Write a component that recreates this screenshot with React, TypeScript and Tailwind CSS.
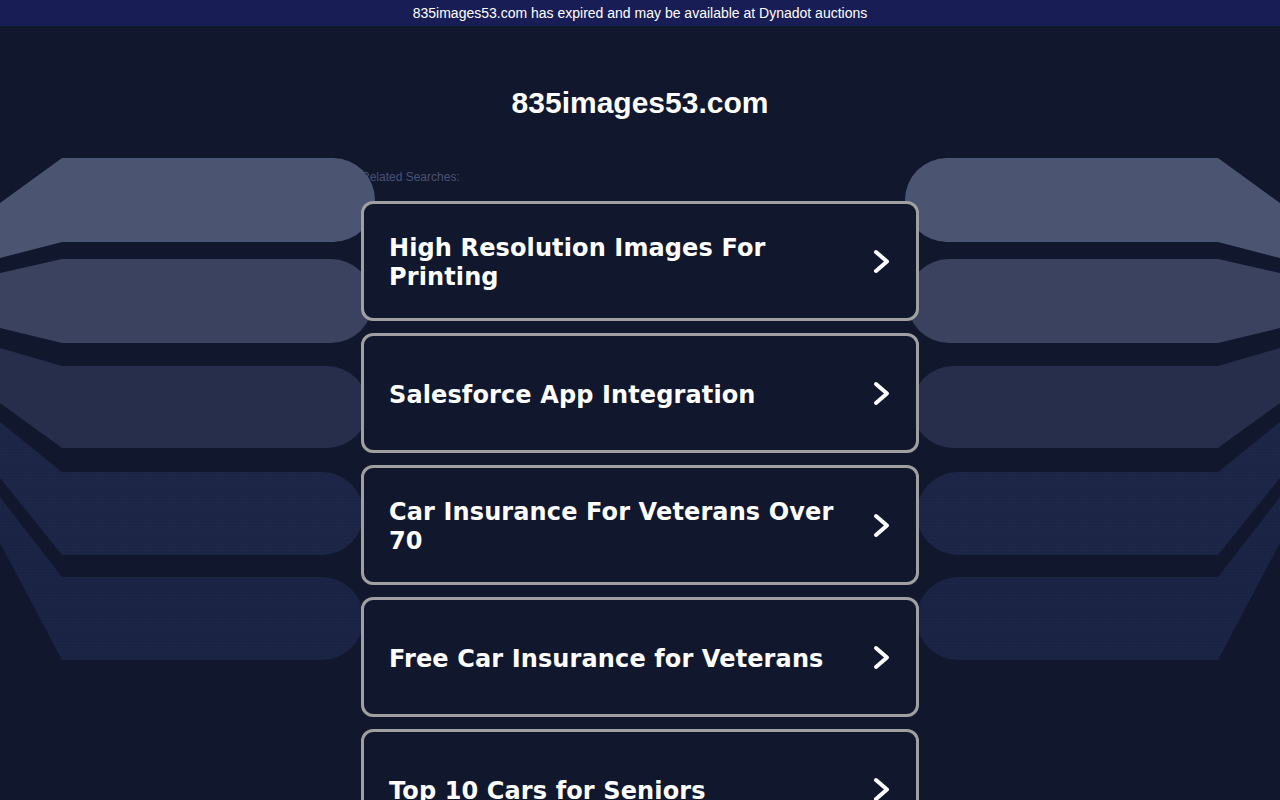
import React from 'react'

const searches = [
  'High Resolution Images For Printing',
  'Salesforce App Integration',
  'Car Insurance For Veterans Over 70',
  'Free Car Insurance for Veterans',
  'Top 10 Cars for Seniors',
]

// left-hand bands, drawn in page coordinates (mirrored for the right side)
const bands = [
  { d: 'M0 203 L62 158 H333 A42 42 0 0 1 333 242 H62 L0 258 Z', fill: '#4b5572' },
  { d: 'M0 273 L62 259 H331 A42 42 0 0 1 331 343 H62 L0 328 Z', fill: '#3a4260' },
  { d: 'M0 348 L62 366 H327 A41 41 0 0 1 327 448 H62 L0 403 Z', fill: '#262e4c' },
  { d: 'M0 422 L62 472 H322 A41.5 41.5 0 0 1 322 555 H62 L0 478 Z', fill: '#1d2547', dots: true },
  { d: 'M0 497 L62 577 H322 A41.5 41.5 0 0 1 322 660 H62 L0 543 Z', fill: '#1b2345', dots: true },
]

function Bands({ mirrored }: { mirrored?: boolean }) {
  const id = mirrored ? 'dots-r' : 'dots-l'
  return (
    <svg
      width="361"
      height="774"
      viewBox="0 26 361 774"
      className={mirrored ? 'block overflow-visible -scale-x-100' : 'block overflow-visible'}
    >
      <defs>
        <pattern id={id} width="3" height="3" patternUnits="userSpaceOnUse">
          <circle cx="1" cy="1" r="0.5" fill="#2a3358" />
          <circle cx="2.5" cy="2.5" r="0.5" fill="#141a36" />
        </pattern>
      </defs>
      {bands.map((b, i) => (
        <g key={i}>
          <path d={b.d} fill={b.fill} />
          {b.dots && <path d={b.d} fill={`url(#${id})`} opacity="0.35" />}
        </g>
      ))}
    </svg>
  )
}

function Chevron() {
  return (
    <svg width="17" height="25" viewBox="0 0 17 25" className="shrink-0">
      <path
        d="M3 3 L14 12.5 L3 22"
        fill="none"
        stroke="#ffffff"
        strokeWidth="4"
        strokeLinecap="round"
        strokeLinejoin="round"
      />
    </svg>
  )
}

export default function App() {
  return (
    <div className="min-h-screen h-[800px] overflow-hidden bg-[#11172c] flex flex-col">
      <div className="h-[26px] shrink-0 bg-[#181d55] flex items-center justify-center
                      text-[14px] text-white font-['Liberation_Sans',Arial,sans-serif]">
        835images53.com has expired and may be available at Dynadot auctions
      </div>

      <div className="flex flex-1">
        <div className="w-[361px] shrink-0 relative z-[1]">
          <Bands />
        </div>

        <div className="w-[558px] shrink-0 flex flex-col">
          <h1 className="mt-[59px] text-center text-[30px] leading-[36px] font-bold text-white
                         font-['Liberation_Sans',Arial,sans-serif]">
            835images53.com
          </h1>

          <div className="mt-[48px] text-[12px] leading-[16px] text-[#4a5274]
                          font-['Liberation_Sans',Arial,sans-serif]">
            Related Searches:
          </div>

          <div className="mt-[16px] flex flex-col gap-[12px]">
            {searches.map((s) => (
              <div
                key={s}
                className="relative z-10 h-[120px] shrink-0 flex items-center gap-[20px]
                           pl-[25px] pr-[26px] bg-[#11172c]
                           border-[3px] border-[#a0a0a0] rounded-[12px]"
              >
                <span className="flex-1 pt-[4px] text-[24px] leading-[29px] tracking-[0.12px]
                                 font-bold text-white font-['DejaVu_Sans',Verdana,sans-serif]">
                  {s}
                </span>
                <Chevron />
              </div>
            ))}
          </div>
        </div>

        <div className="w-[361px] shrink-0 relative z-[1]">
          <Bands mirrored />
        </div>
      </div>
    </div>
  )
}
